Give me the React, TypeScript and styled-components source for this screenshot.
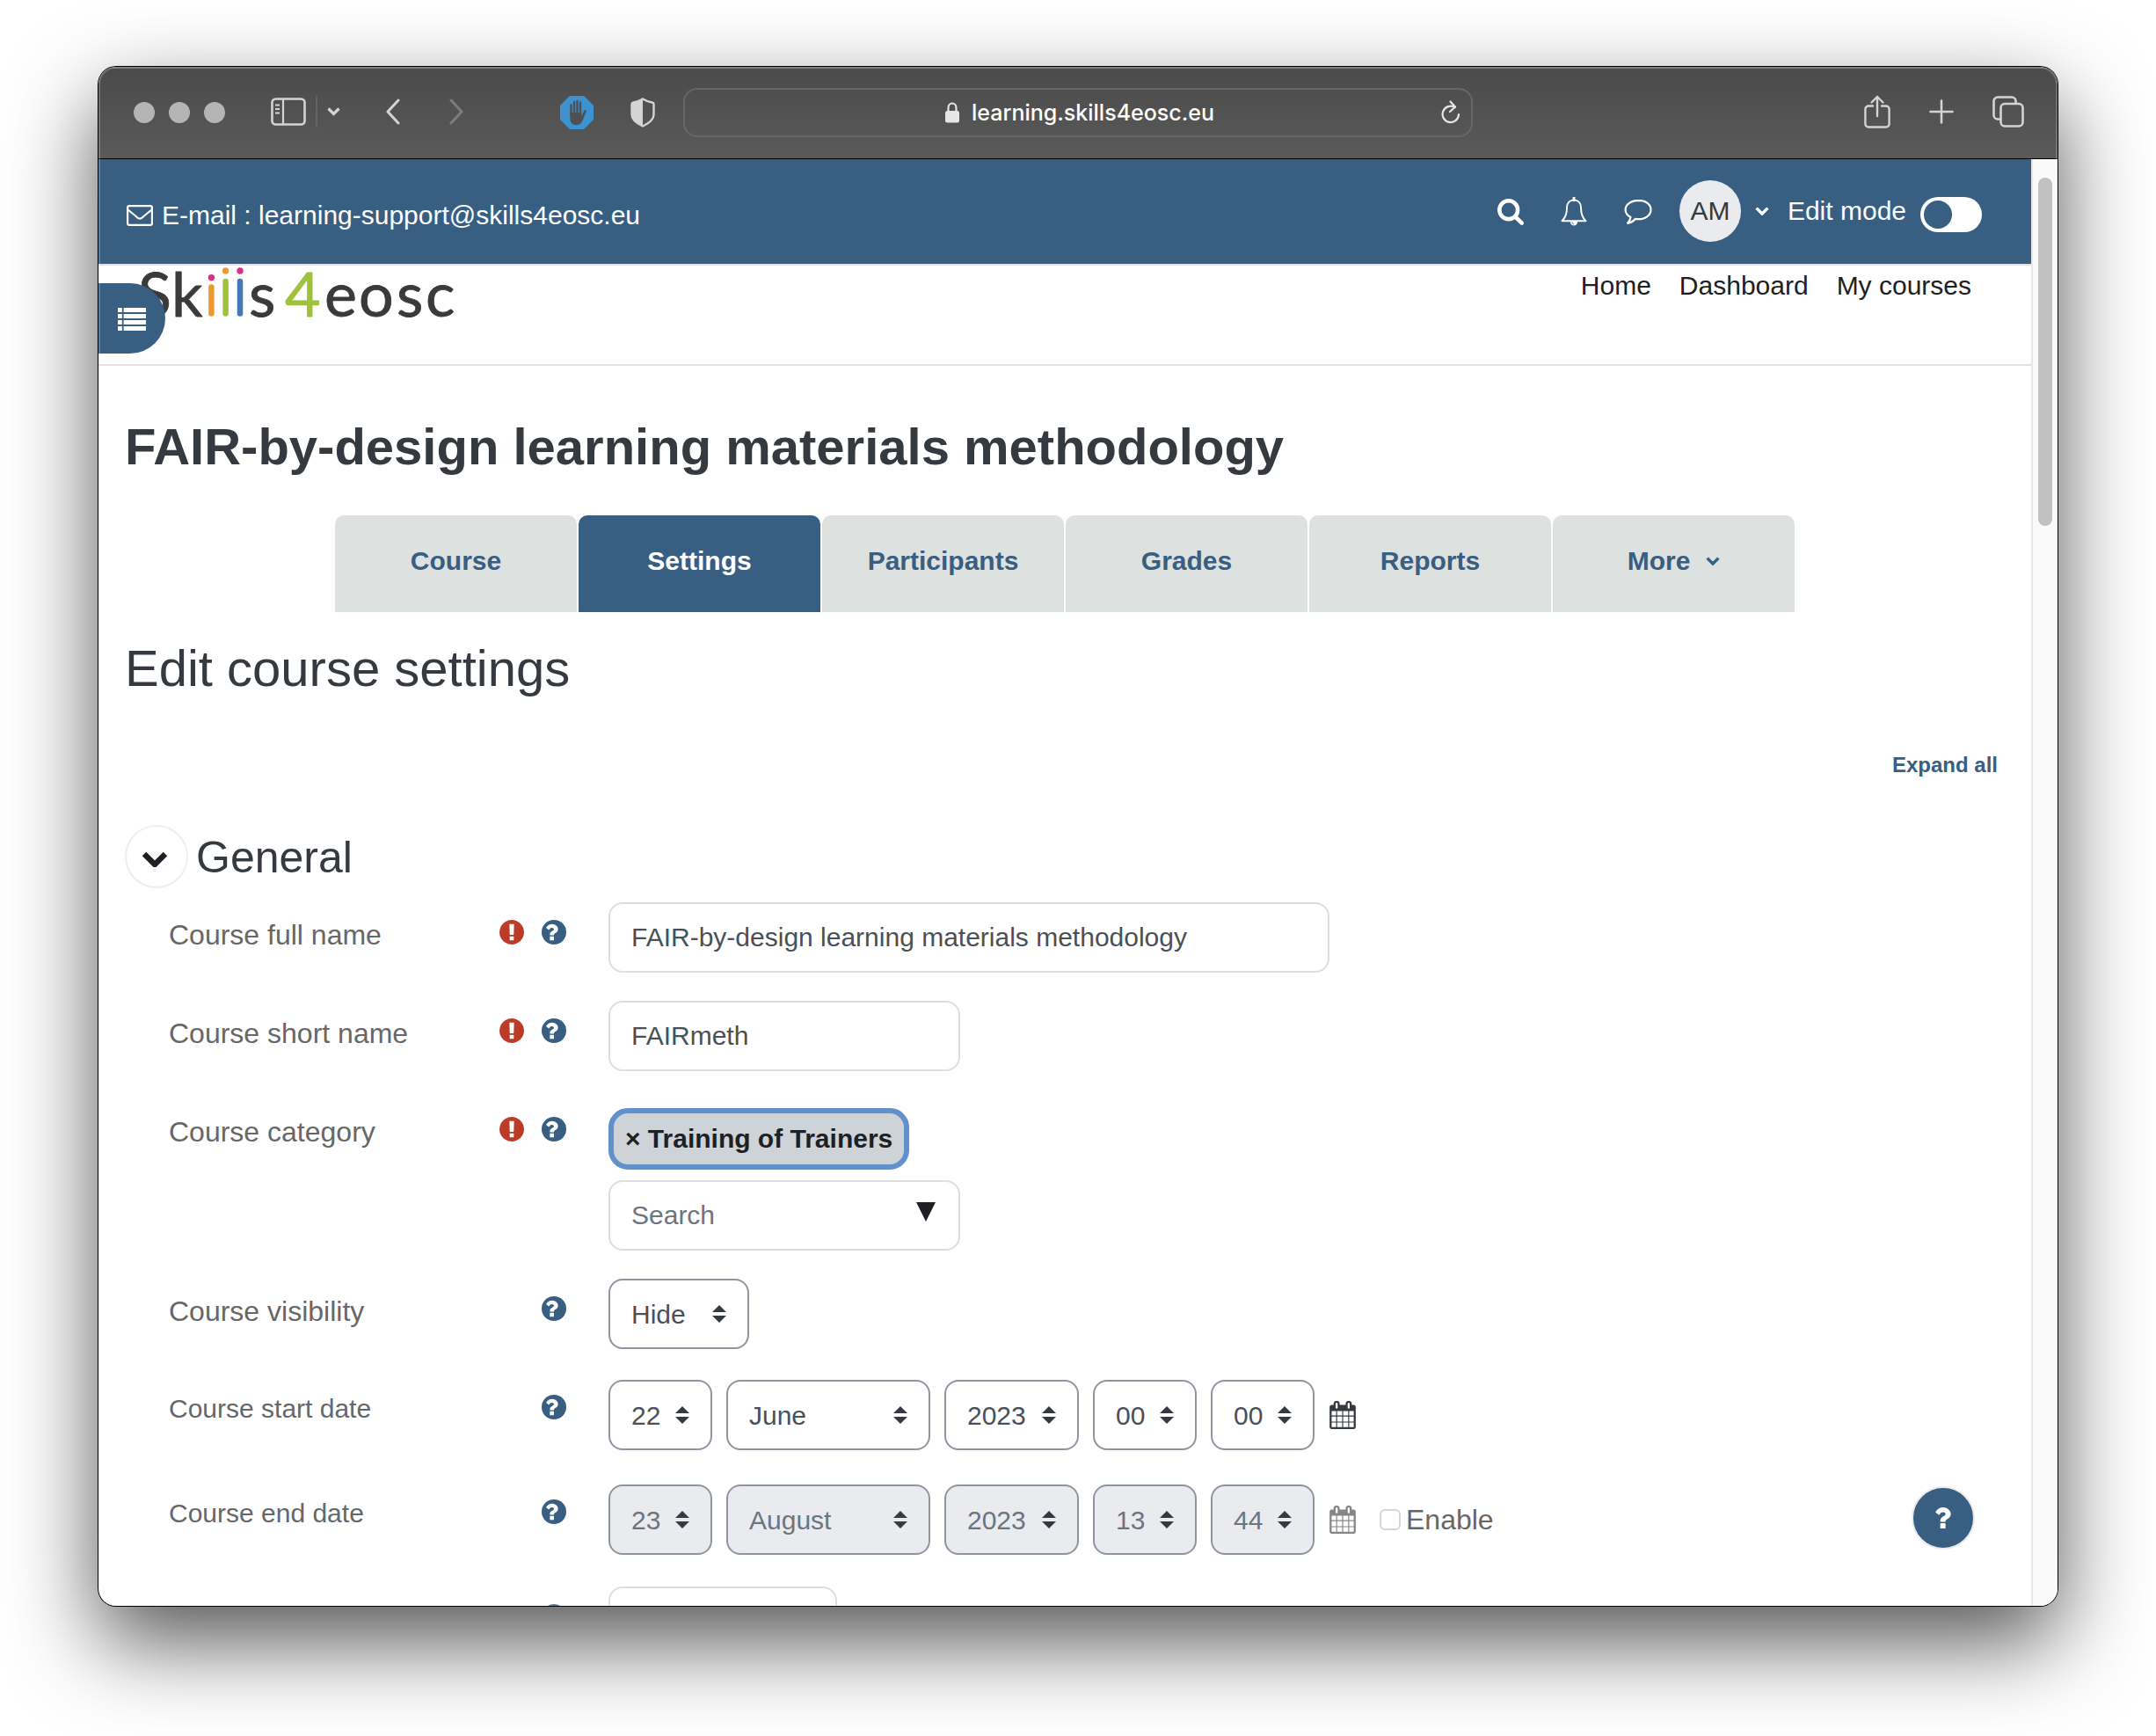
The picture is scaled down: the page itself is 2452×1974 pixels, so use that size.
import React from "react";
import styled, { createGlobalStyle } from "styled-components";

const brand = "#385e82";
const ink = "#1d2125";
const heading = "#343a40";
const muted = "#676767";
const line = "#dedede";

const GlobalStyle = createGlobalStyle`
  *, *::before, *::after { box-sizing: border-box; }
  body {
    margin: 0;
    background: #fff;
    color: ${ink};
    font-family: "Liberation Sans", Arial, sans-serif;
    font-size: 30px;
  }
  button, input, select { font: inherit; color: inherit; margin: 0; }
  a { color: inherit; text-decoration: none; }
  svg { display: block; flex: none; }
`;

/* ---------- window ---------- */

const Desktop = styled.div`
  height: 100vh;
  padding: 76px 112px 148px;
  overflow: hidden;
`;

const Window = styled.div`
  position: relative;
  display: flex;
  flex-direction: column;
  height: 100%;
  border-radius: 20px;
  box-shadow: 0 0 0 1px #000, 0 40px 100px rgba(0, 0, 0, 0.68);
  background: #fff;
`;

const WindowClip = styled.div`
  display: flex;
  flex-direction: column;
  flex: 1;
  min-height: 0;
  overflow: hidden;
  border-radius: inherit;

  &::after {
    content: "";
    position: absolute;
    inset: 0;
    border-radius: inherit;
    box-shadow: inset 0 0 0 2px rgba(255, 255, 255, 0.18);
    pointer-events: none;
  }
`;

const Toolbar = styled.div`
  display: grid;
  grid-template-columns: minmax(0, 1fr) 898px minmax(0, 1fr);
  align-items: center;
  flex: none;
  height: 105px;
  border-bottom: 1px solid #000;
  background: linear-gradient(#4a4a4a, #5a5a5a);
  box-shadow: inset 0 2px 0 rgba(255, 255, 255, 0.14);
  color: #d4d4d4;
`;

const ToolbarLeft = styled.div`
  display: flex;
  align-items: center;
  gap: 52px;
  padding: 0 32px 0 40px;
`;

const ToolbarRight = styled.div`
  display: flex;
  align-items: center;
  justify-content: flex-end;
  gap: 44px;
  padding: 0 38px 2px 0;
`;

const ToolGroup = styled.div<{ $gap: number; $end?: boolean; $raised?: boolean }>`
  display: flex;
  align-items: center;
  gap: ${(p) => p.$gap}px;
  margin-left: ${(p) => (p.$end ? "auto" : "0")};
  padding-bottom: ${(p) => (p.$raised ? 2 : 0)}px;
`;

const Light = styled.span`
  width: 24px;
  height: 24px;
  border-radius: 50%;
  background: #b5b5b5;
`;

const Separator = styled.span`
  width: 2px;
  height: 36px;
  background: #646464;
`;

const IconButton = styled.button`
  display: flex;
  align-items: center;
  justify-content: center;
  padding: 0;
  border: 0;
  background: none;
`;

const AddressBar = styled.div`
  display: flex;
  align-items: center;
  justify-content: center;
  gap: 14px;
  height: 56px;
  padding: 0 12px 0 52px;
  border: 2px solid #676767;
  border-radius: 16px;
  color: #e6e6e6;
`;

const AddressMain = styled.label`
  display: flex;
  flex: 1;
  align-items: center;
  justify-content: center;
  gap: 14px;
`;

const AddressInput = styled.input`
  field-sizing: content;
  padding: 0;
  border: 0;
  outline: 0;
  background: none;
  color: #fff;
  font-family: Inter, sans-serif;
  font-size: 25px;
  font-weight: 500;
`;

/* ---------- page ---------- */

const Viewport = styled.div`
  display: flex;
  flex: 1;
  min-height: 0;
`;

const Page = styled.div`
  position: relative;
  flex: 1;
  min-width: 0;
  overflow: hidden;
`;

const ScrollTrack = styled.div`
  flex: none;
  width: 30px;
  padding: 21px 6px;
  border-left: 2px solid #e7e7e7;
  background: #fafafa;
`;

const ScrollThumb = styled.div`
  width: 16px;
  height: 396px;
  border-radius: 8px;
  background: #c1c1c1;
`;

const TopBar = styled.header`
  display: flex;
  align-items: center;
  justify-content: space-between;
  height: 119px;
  padding: 0 56px 0 32px;
  background: ${brand};
  color: #fff;
`;

const MailLink = styled.a`
  display: flex;
  align-items: center;
  gap: 10px;
  padding-top: 8px;
`;

const TopActions = styled.div`
  display: flex;
  align-items: center;
  gap: 21px;
  padding-bottom: 2px;
`;

const TopIcons = styled.div`
  display: flex;
  align-items: center;
  gap: 42px;
  padding: 2px 10px 0 0;
`;

const UserButton = styled(IconButton)`
  gap: 16px;
`;

const Avatar = styled.span`
  display: grid;
  place-items: center;
  width: 70px;
  height: 70px;
  border-radius: 50%;
  background: #e9ebef;
  color: ${heading};
`;

const EditMode = styled.label`
  display: flex;
  align-items: center;
  gap: 16px;
`;

const Toggle = styled.input`
  appearance: none;
  width: 70px;
  height: 40px;
  margin-top: 8px;
  padding: 4px;
  border-radius: 20px;
  background: #fff;

  &::before {
    content: "";
    display: block;
    width: 32px;
    height: 32px;
    border-radius: 50%;
    background: ${brand};
  }
`;

const SiteHeader = styled.div`
  display: flex;
  align-items: flex-start;
  justify-content: space-between;
  height: 116px;
  padding: 0 68px 0 30px;
  border-top: 2px solid #e6e0e3;
  border-bottom: 2px solid #e6e0e3;
`;

const SiteNav = styled.nav`
  display: flex;
  gap: 32px;
  line-height: 46px;
`;

const LogoArt = styled.svg`
  overflow: visible;
`;

const DrawerButton = styled(IconButton)`
  position: absolute;
  top: 141px;
  left: 0;
  width: 76px;
  height: 80px;
  padding-top: 2px;
  border-radius: 0 40px 40px 0;
  background: ${brand};
  color: #fff;
`;

const Main = styled.main`
  padding: 57px 30px 0;
`;

const Title = styled.h1`
  margin: 0;
  color: ${heading};
  font-size: 58px;
  line-height: 70px;
`;

const Subtitle = styled.h2`
  margin: 29px 0 0;
  color: ${heading};
  font-size: 58px;
  font-weight: 400;
  line-height: 70px;
`;

const Tabs = styled.nav`
  display: grid;
  grid-template-columns: repeat(6, 1fr);
  gap: 2px;
  max-width: 1660px;
  margin: 43px auto 0;
`;

const Tab = styled.a<{ $active?: boolean }>`
  display: flex;
  align-items: center;
  justify-content: center;
  gap: 18px;
  height: 110px;
  padding-bottom: 6px;
  border-radius: 10px 10px 0 0;
  background: ${(p) => (p.$active ? brand : "#dde1e0")};
  color: ${(p) => (p.$active ? "#fff" : brand)};
  font-weight: 700;
`;

const ExpandRow = styled.div`
  display: flex;
  justify-content: flex-end;
  margin-top: 57px;
  padding-right: 8px;
`;

const ExpandLink = styled.a`
  color: ${brand};
  font-size: 24px;
  font-weight: 700;
  line-height: 36px;
`;

const SectionHead = styled.div`
  display: flex;
  align-items: center;
  gap: 9px;
  margin: 50px 0 16px;
`;

const CollapseButton = styled(IconButton)`
  width: 72px;
  height: 72px;
  padding: 6px 4px 0 0;
  border: 2px solid #eee;
  border-radius: 50%;
`;

const SectionTitle = styled.h3`
  margin: 0;
  padding-top: 2px;
  color: ${heading};
  font-size: 50px;
  font-weight: 400;
  line-height: 60px;
`;

const Form = styled.form`
  display: flex;
  flex-direction: column;
  gap: 32px;
  padding-left: 50px;
`;

const Row = styled.div`
  display: grid;
  grid-template-columns: 500px minmax(0, 1fr);
  align-items: start;
`;

const LabelCell = styled.div`
  display: flex;
  justify-content: space-between;
  padding-right: 48px;
`;

const FieldLabel = styled.label<{ $small?: boolean }>`
  padding-top: 14px;
  color: ${muted};
  font-size: ${(p) => (p.$small ? 30 : 32)}px;
  line-height: ${(p) => (p.$small ? 44 : 46)}px;
`;

const RowIcons = styled.span`
  display: flex;
  align-items: flex-start;
  gap: 20px;
  margin-left: auto;
  padding-top: 20px;
`;

const TextInput = styled.input<{ $width: number }>`
  display: block;
  width: ${(p) => p.$width}px;
  max-width: 100%;
  height: 80px;
  padding: 0 24px;
  border: 2px solid ${line};
  border-radius: 16px;
  background: #fff;
  color: #495057;

  &::placeholder { color: #6c757d; opacity: 1; }
`;

const CategoryField = styled.div`
  display: flex;
  flex-direction: column;
  align-items: flex-start;
  gap: 12px;
  padding-top: 10px;
`;

const Tag = styled.button`
  height: 70px;
  padding: 0 13px;
  border: 6px solid #6290cc;
  border-radius: 22px;
  background: #ced3d8;
  color: ${ink};
  font-weight: 700;
  white-space: pre;
`;

const Overlay = styled.div`
  display: grid;
  align-items: center;
  justify-items: end;

  & > * { grid-area: 1 / 1; }
  & > svg { pointer-events: none; }
`;

const OpenList = styled(IconButton)`
  margin: 0 28px 8px 0;
`;

const Select = styled.select<{ $width: number }>`
  appearance: none;
  width: ${(p) => p.$width}px;
  height: 80px;
  padding: 0 24px;
  border: 2px solid #8f959e;
  border-radius: 16px;
  background: #fff;
  color: #495057;

  &:disabled {
    background: #e9ebef;
    color: #6c757d;
    opacity: 1;
  }
`;

const SelectBox = styled(Overlay)`
  & > svg { margin-right: 26px; }
`;

const DateField = styled.div`
  display: flex;
  align-items: center;
  gap: 16px;
  padding: 3px 0 4px;
`;

const SelectRow = styled.div`
  display: flex;
`;

const CalendarButton = styled(IconButton)`
  color: ${heading};
  &:disabled { color: #868686; }
`;

const EnableLabel = styled.label`
  display: flex;
  align-items: center;
  gap: 6px;
  margin-left: 10px;
  color: ${muted};
  font-size: 32px;
`;

const CheckBox = styled.input`
  appearance: none;
  width: 24px;
  height: 24px;
  border: 2px solid #d6d6d6;
  border-radius: 6px;
  background: #fff;
`;

const HelpButton = styled(IconButton)`
  position: absolute;
  right: 64px;
  bottom: 64px;
  width: 72px;
  height: 72px;
  border: 2px solid #ebebeb;
  border-radius: 50%;
  background: ${brand};
  color: #fff;
`;

/* ---------- icons ---------- */

const Chevron = ({ width = 16 }: { width?: number }) => (
  <svg width={width} height={(width * 10) / 16} viewBox="0 0 16 10" fill="none" stroke="currentColor" strokeWidth="3.4">
    <path d="M1.6 1.6 8 8l6.4-6.4" />
  </svg>
);

const SidebarIcon = () => (
  <svg width="40" height="32" viewBox="0 0 40 32" fill="none" stroke="currentColor" strokeWidth="2.6">
    <rect x="1.5" y="1.5" width="37" height="29" rx="4" />
    <path d="M14 2v28M5 8.500h5M5 13h5M5 17.500h5" strokeWidth="2.200" />
  </svg>
);

const BackIcon = ({ flip }: { flip?: boolean }) => (
  <svg width="16" height="30" viewBox="0 0 16 30" fill="none" stroke={flip ? "#7d7d7d" : "#d4d4d4"} strokeWidth="3" strokeLinecap="round" strokeLinejoin="round">
    <path d={flip ? "M2 2l12 13L2 28" : "M14 2 2 15l12 13"} />
  </svg>
);

const StopHandIcon = () => (
  <svg width="38" height="38" viewBox="0 0 38 38">
    <path d="M11 0h16l11 11v16L27 38H11L0 27V11z" fill="#3c93d0" />
    <g fill="none" stroke="#4f5052" strokeLinecap="round" strokeWidth="2.400">
      <path d="M12.500 10.500v11M16 7v14M19.500 6v14M23 7.500v14" />
      <path d="M28.500 17.500 25.500 24" strokeWidth="2.800" />
    </g>
    <path d="M11.300 19h13v4l3.800-3.500c-1 5-2.200 8.500-4 11-1.400 2-3 2.700-5.600 2.700-4.800 0-7.200-3.200-7.200-8z" fill="#4f5052" />
  </svg>
);

const ShieldIcon = () => (
  <svg width="28" height="34" viewBox="0 0 28 34">
    <path d="M14 1.500c3.500 2.200 7.500 3.500 11.300 4.200.8.200 1.200.7 1.200 1.500v12.300c0 5.500-4.800 9.300-12.500 13-7.700-3.700-12.500-7.500-12.500-13V7.200c0-.8.400-1.300 1.200-1.500C6.500 5 10.500 3.700 14 1.500z" fill="none" stroke="currentColor" strokeWidth="2.400" />
    <path d="M14 1.500v31C6.300 28.800 1.500 25 1.500 19.500V7.200c0-.8.400-1.300 1.200-1.500C6.500 5 10.500 3.700 14 1.500z" fill="currentColor" />
  </svg>
);

const LockIcon = () => (
  <svg width="16" height="24" viewBox="0 0 16 24">
    <rect y="10" width="16" height="13.500" rx="2.500" fill="currentColor" />
    <path d="M3.500 11V6.500a4.500 5 0 0 1 9 0V11" fill="none" stroke="currentColor" strokeWidth="2.200" />
  </svg>
);

const ReloadIcon = () => (
  <svg width="22" height="28" viewBox="0 0 22 28" fill="none" stroke="currentColor" strokeWidth="2.200" strokeLinecap="round" strokeLinejoin="round">
    <path d="M20 16a9.200 9.200 0 1 1-5-8.300l1 .3" />
    <path d="M10.500 1.500 16 7.500l-6 5.500" />
  </svg>
);

const ShareIcon = () => (
  <svg width="30" height="38" viewBox="0 0 30 38" fill="none" stroke="currentColor" strokeWidth="2.400" strokeLinecap="round" strokeLinejoin="round">
    <path d="M10 12.500H5a3.600 3.600 0 0 0-3.600 3.600v16.800A3.600 3.600 0 0 0 5 36.500h20a3.600 3.600 0 0 0 3.600-3.600V16.100a3.600 3.600 0 0 0-3.600-3.600h-5" />
    <path d="M15 24V2M8.500 8.500 15 2l6.500 6.500" />
  </svg>
);

const PlusIcon = () => (
  <svg width="28" height="28" viewBox="0 0 28 28" stroke="currentColor" strokeWidth="2.600" strokeLinecap="round">
    <path d="M14 1.500v25M1.500 14h25" />
  </svg>
);

const TabsIcon = () => (
  <svg width="36" height="36" viewBox="0 0 36 36" fill="none" stroke="currentColor" strokeWidth="2.600">
    <rect x="9.500" y="9" width="25" height="25.500" rx="4.500" />
    <path d="M9 26.500H6a4.500 4.500 0 0 1-4.500-4.500V6A4.500 4.500 0 0 1 6 1.500h16A4.500 4.500 0 0 1 26.500 6v3" />
  </svg>
);

const MailIcon = () => (
  <svg width="30" height="24" viewBox="0 0 30 24" fill="none" stroke="currentColor" strokeWidth="2.200" strokeLinejoin="round">
    <rect x="1.100" y="1.100" width="27.800" height="21.800" rx="2" />
    <path d="M1.500 5.500c4 3.200 7.500 6 10.500 8.700 1.800 1.600 4.200 1.600 6 0 3-2.700 6.500-5.500 10.500-8.700" />
  </svg>
);

const SearchIcon = () => (
  <svg width="30" height="30" viewBox="64 128 1664 1664" fill="currentColor">
    <path d="M1216 832q0-185-131.500-316.500t-316.500-131.500-316.500 131.500-131.500 316.500 131.500 316.500 316.500 131.500 316.500-131.500 131.500-316.500zm512 832q0 52-38 90t-90 38q-54 0-90-38l-343-342q-179 124-399 124-143 0-273.500-55.500t-225-150-150-225-55.500-273.500 55.500-273.500 150-225 225-150 273.500-55.500 273.500 55.500 225 150 150 225 55.500 273.500q0 220-124 399l343 343q37 37 37 90z" />
  </svg>
);

const BellIcon = () => (
  <svg width="30" height="34" viewBox="0 0 30 34" fill="none" stroke="currentColor" strokeWidth="2" strokeLinejoin="round">
    <path d="M15 3.500c-5 0-8 3.600-8 8.500 0 7.500-2 12-5.500 15.200h27C25 24 23 19.500 23 12c0-4.900-3-8.500-8-8.500z" />
    <path d="M15 1v2.500" strokeWidth="3" strokeLinecap="round" />
    <path d="M10.800 28h8.400a4.200 4.600 0 0 1-8.400 0z" fill="currentColor" stroke="none" />
    <path d="M12.800 28.500c.2 1.400 1 2.300 2.300 2.400" stroke={brand} strokeWidth="0.900" />
  </svg>
);

const CommentIcon = () => (
  <svg width="32" height="30" viewBox="0 0 32 30" fill="none" stroke="currentColor" strokeWidth="2.200" strokeLinejoin="round">
    <path d="M16.500 1.800C8.400 1.800 1.600 6.400 1.600 12.400c0 3.600 2.300 6.600 5.900 8.500-.5 2.800-1.600 4.900-3.400 6.900 3.700-.7 6.500-2.400 8.700-4.900 1.200.2 2.400.3 3.700.3 8.100 0 14-4.800 14-10.800S24.600 1.800 16.500 1.800z" />
  </svg>
);

const ListIcon = () => (
  <svg width="32" height="26" viewBox="0 0 32 26" fill="currentColor">
    {[0, 7, 14, 21].map((y) => (
      <path key={y} d={`M0 ${y}h4.800v5H0zM6.600 ${y}H32v5H6.600z`} />
    ))}
  </svg>
);

const RequiredIcon = () => (
  <svg width="28" height="28" viewBox="128 128 1536 1536" fill="#bb3b28" role="img" aria-label="Required">
    <path d="M896 128q209 0 385.500 103t279.500 279.500 103 385.500-103 385.500-279.500 279.500-385.500 103-385.500-103-279.500-279.500-103-385.500 103-385.500 279.500-279.500 385.500-103zm128 1247v-190q0-14-9-23.500t-22-9.500h-192q-13 0-23 10t-10 23v190q0 13 10 23t23 10h192q13 0 22-9.500t9-23.500zm-2-344l18-621q0-12-10-18-10-8-24-8h-220q-14 0-24 8-10 6-10 18l17 621q0 10 10 17.500t24 7.500h185q14 0 23.500-7.500t10.500-17.500z" />
  </svg>
);

const questionMark =
  "M896 1376v-192q0-14-9-23t-23-9h-192q-14 0-23 9t-9 23v192q0 14 9 23t23 9h192q14 0 23-9t9-23zm256-672q0-88-55.500-163t-138.500-116-170-41q-243 0-371 213-15 24 8 42l132 100q7 6 19 6 16 0 25-12 53-68 86-92 34-24 86-24 48 0 85.500 26t37.500 59q0 38-20 61t-68 45q-63 28-115.500 86.500t-52.500 125.500v36q0 14 9 23t23 9h192q14 0 23-9t9-23q0-19 21.500-49.500t54.500-49.500q32-18 49-28.500t46-35 44.500-48 28-60.500 12.500-81z";

const HelpIcon = () => (
  <svg width="28" height="28" viewBox="128 128 1536 1536">
    <circle cx="896" cy="896" r="768" fill={brand} />
    <path d={questionMark} fill="#fff" />
  </svg>
);

const QuestionIcon = () => (
  <svg width="18" height="24" viewBox="400 384 768 1024" fill="currentColor">
    <path d={questionMark} />
  </svg>
);

const CalendarIcon = () => (
  <svg width="32" height="32" viewBox="0 0 1792 1792" fill="currentColor">
    <path d="M192 1664h288v-288h-288v288zm352 0h320v-288h-320v288zm-352-352h288v-320h-288v320zm352 0h320v-320h-320v320zm-352-384h288v-288h-288v288zm736 736h320v-288h-320v288zm-384-736h320v-288h-320v288zm768 736h288v-288h-288v288zm-384-352h320v-320h-320v320zm-352-864v-288q0-13-9.500-22.500t-22.500-9.500h-64q-13 0-22.500 9.500t-9.500 22.500v288q0 13 9.500 22.500t22.500 9.500h64q13 0 22.500-9.500t9.500-22.500zm736 864h288v-320h-288v320zm-384-384h320v-288h-320v288zm384 0h288v-288h-288v288zm32-480v-288q0-13-9.500-22.500t-22.500-9.500h-64q-13 0-22.500 9.500t-9.500 22.500v288q0 13 9.500 22.500t22.500 9.500h64q13 0 22.500-9.500t9.500-22.500zm384-64v1280q0 52-38 90t-90 38h-1408q-52 0-90-38t-38-90v-1280q0-52 38-90t90-38h128v-96q0-66 47-113t113-47h64q66 0 113 47t47 113v96h384v-96q0-66 47-113t113-47h64q66 0 113 47t47 113v96h128q52 0 90 38t38 90z" />
  </svg>
);

const SortIcon = () => (
  <svg width="16" height="20" viewBox="0 0 16 20" fill={heading}>
    <path d="M8 0l8 8H0zM8 20l8-8H0z" />
  </svg>
);

const Logo = () => (
  <LogoArt width="400" height="64" viewBox="0 0 400 64" role="img" aria-label="Skills4eosc">
    <g fontFamily="Lato, sans-serif" fontSize="70" fill="#3a3a38" stroke="#3a3a38" strokeWidth="0.8" strokeLinejoin="round">
      <text y="58" x="15 53">Sk</text>
      <text y="58" x="141">s</text>
      <text y="58" x="182" fill="#9ec23c" stroke="#9ec23c">4</text>
      <text y="58" x="227 266 309 342">eosc</text>
    </g>
    <g strokeWidth="6.500" strokeLinecap="round">
      <path d="M98.400 24.500v30" stroke="#eb9a32" />
      <path d="M114.600 18v36.500" stroke="#9ec23c" />
      <path d="M131 18v36.500" stroke="#4379b2" />
    </g>
    <circle cx="98.400" cy="13.600" r="3.700" fill="#dc2f83" />
    <circle cx="114.600" cy="6" r="3.700" fill="#eb9a32" />
    <circle cx="131" cy="6" r="3.700" fill="#dc2f83" />
  </LogoArt>
);

/* ---------- form parts ---------- */

type FieldRowProps = {
  label?: string;
  htmlFor?: string;
  required?: boolean;
  small?: boolean;
  children: React.ReactNode;
};

const FieldRow = ({ label, htmlFor, required, small, children }: FieldRowProps) => (
  <Row>
    <LabelCell>
      {label && <FieldLabel htmlFor={htmlFor} $small={small}>{label}</FieldLabel>}
      <RowIcons>
        {required && <RequiredIcon />}
        <IconButton type="button" aria-label="Help"><HelpIcon /></IconButton>
      </RowIcons>
    </LabelCell>
    {children}
  </Row>
);

type PickProps = { id?: string; name: string; value: string; width: number; disabled?: boolean };

const Pick = ({ id, name, value, width, disabled }: PickProps) => (
  <SelectBox>
    <Select id={id} aria-label={name} $width={width} disabled={disabled} defaultValue={value}>
      <option>{value}</option>
    </Select>
    <SortIcon />
  </SelectBox>
);

const dateParts = [
  { name: "Day", width: 118 },
  { name: "Month", width: 232 },
  { name: "Year", width: 153 },
  { name: "Hour", width: 118 },
  { name: "Minute", width: 118 },
];

type DatePickProps = { id: string; values: string[]; disabled?: boolean; children?: React.ReactNode };

const DatePick = ({ id, values, disabled, children }: DatePickProps) => (
  <DateField>
    {dateParts.map((part, i) => (
      <Pick key={part.name} id={i === 0 ? id : undefined} name={part.name} value={values[i]} width={part.width} disabled={disabled} />
    ))}
    <CalendarButton type="button" aria-label="Calendar" disabled={disabled}><CalendarIcon /></CalendarButton>
    {children}
  </DateField>
);

const tabs = ["Course", "Settings", "Participants", "Grades", "Reports", "More"];

export default function App() {
  return (
    <Desktop>
      <GlobalStyle />
      <Window>
        <WindowClip>
          <Toolbar>
            <ToolbarLeft>
              <ToolGroup $gap={16}><Light /><Light /><Light /></ToolGroup>
              <ToolGroup $gap={11} $raised>
                <IconButton aria-label="Sidebar"><SidebarIcon /></IconButton>
                <Separator />
                <IconButton aria-label="Tab groups"><Chevron width={15} /></IconButton>
              </ToolGroup>
              <ToolGroup $gap={56} $raised>
                <IconButton aria-label="Back"><BackIcon /></IconButton>
                <IconButton aria-label="Forward"><BackIcon flip /></IconButton>
              </ToolGroup>
              <ToolGroup $gap={42} $end>
                <IconButton aria-label="Ad blocker"><StopHandIcon /></IconButton>
                <IconButton aria-label="Privacy report"><ShieldIcon /></IconButton>
              </ToolGroup>
            </ToolbarLeft>
            <AddressBar>
              <AddressMain>
                <LockIcon />
                <AddressInput aria-label="Address" defaultValue="learning.skills4eosc.eu" />
              </AddressMain>
              <IconButton aria-label="Reload"><ReloadIcon /></IconButton>
            </AddressBar>
            <ToolbarRight>
              <IconButton aria-label="Share"><ShareIcon /></IconButton>
              <IconButton aria-label="New tab"><PlusIcon /></IconButton>
              <IconButton aria-label="Tab overview"><TabsIcon /></IconButton>
            </ToolbarRight>
          </Toolbar>

          <Viewport>
            <Page>
              <TopBar>
                <MailLink href="mailto:learning-support@skills4eosc.eu">
                  <MailIcon />
                  E-mail : learning-support@skills4eosc.eu
                </MailLink>
                <TopActions>
                  <TopIcons>
                    <IconButton aria-label="Search"><SearchIcon /></IconButton>
                    <IconButton aria-label="Notifications"><BellIcon /></IconButton>
                    <IconButton aria-label="Messages"><CommentIcon /></IconButton>
                  </TopIcons>
                  <UserButton aria-label="User menu">
                    <Avatar>AM</Avatar>
                    <Chevron />
                  </UserButton>
                  <EditMode>
                    Edit mode
                    <Toggle type="checkbox" />
                  </EditMode>
                </TopActions>
              </TopBar>

              <SiteHeader>
                <a href="#home"><Logo /></a>
                <SiteNav>
                  <a href="#home">Home</a>
                  <a href="#dashboard">Dashboard</a>
                  <a href="#courses">My courses</a>
                </SiteNav>
              </SiteHeader>
              <DrawerButton aria-label="Open course index"><ListIcon /></DrawerButton>

              <Main>
                <Title>FAIR-by-design learning materials methodology</Title>
                <Tabs>
                  {tabs.map((name) => (
                    <Tab key={name} href={`#${name.toLowerCase()}`} $active={name === "Settings"}>
                      {name}
                      {name === "More" && <Chevron />}
                    </Tab>
                  ))}
                </Tabs>
                <Subtitle>Edit course settings</Subtitle>
                <ExpandRow><ExpandLink href="#expand">Expand all</ExpandLink></ExpandRow>

                <SectionHead>
                  <CollapseButton aria-label="Collapse General"><Chevron width={30} /></CollapseButton>
                  <SectionTitle>General</SectionTitle>
                </SectionHead>

                <Form>
                  <FieldRow label="Course full name" htmlFor="fullname" required>
                    <TextInput id="fullname" $width={820} defaultValue="FAIR-by-design learning materials methodology" />
                  </FieldRow>
                  <FieldRow label="Course short name" htmlFor="shortname" required>
                    <TextInput id="shortname" $width={400} defaultValue="FAIRmeth" />
                  </FieldRow>
                  <FieldRow label="Course category" htmlFor="category" required>
                    <CategoryField>
                      <Tag type="button">× Training of Trainers</Tag>
                      <Overlay>
                        <TextInput id="category" $width={400} placeholder="Search" />
                        <OpenList type="button" aria-label="Show categories">
                          <svg width="22" height="22" viewBox="0 0 22 22" fill={ink}><path d="M0 0h22L11 22z" /></svg>
                        </OpenList>
                      </Overlay>
                    </CategoryField>
                  </FieldRow>
                  <FieldRow label="Course visibility" htmlFor="visibility">
                    <SelectRow>
                      <Pick id="visibility" name="Course visibility" value="Hide" width={160} />
                    </SelectRow>
                  </FieldRow>
                  <FieldRow label="Course start date" htmlFor="start" small>
                    <DatePick id="start" values={["22", "June", "2023", "00", "00"]} />
                  </FieldRow>
                  <FieldRow label="Course end date" htmlFor="end" small>
                    <DatePick id="end" values={["23", "August", "2023", "13", "44"]} disabled>
                      <EnableLabel><CheckBox type="checkbox" />Enable</EnableLabel>
                    </DatePick>
                  </FieldRow>
                  <FieldRow>
                    <TextInput aria-label="Course ID number" $width={260} />
                  </FieldRow>
                </Form>
              </Main>
              <HelpButton aria-label="Help"><QuestionIcon /></HelpButton>
            </Page>
            <ScrollTrack><ScrollThumb /></ScrollTrack>
          </Viewport>
        </WindowClip>
      </Window>
    </Desktop>
  );
}
